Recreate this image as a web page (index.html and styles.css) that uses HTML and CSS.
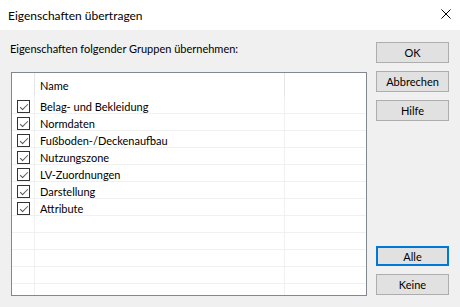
FILE: index.html
```html
<!DOCTYPE html>
<html lang="de">
<head>
  <meta charset="UTF-8">
  <title>Eigenschaften übertragen</title>
  <link rel="stylesheet" href="styles.css">
</head>
<body>
  <div class="titlebar">
    <div class="title">Eigenschaften übertragen</div>
    <div class="close">
      <svg width="10" height="10" viewBox="0 0 10 10">
        <path d="M0.5 0.5 L9.5 9.5 M9.5 0.5 L0.5 9.5" stroke="#000" stroke-width="1" fill="none"/>
      </svg>
    </div>
  </div>

  <div class="dialog">
    <div class="left">
      <div class="label">Eigenschaften folgender Gruppen übernehmen:</div>
      <div class="list">
        <div class="row header">
          <div class="cell check"></div>
          <div class="cell name">Name</div>
          <div class="cell rest"></div>
        </div>
        <div class="row"><div class="cell check"><span class="box"></span></div><div class="cell name">Belag- und Bekleidung</div><div class="cell rest"></div></div>
        <div class="row"><div class="cell check"><span class="box"></span></div><div class="cell name">Normdaten</div><div class="cell rest"></div></div>
        <div class="row"><div class="cell check"><span class="box"></span></div><div class="cell name">Fußboden-/Deckenaufbau</div><div class="cell rest"></div></div>
        <div class="row"><div class="cell check"><span class="box"></span></div><div class="cell name">Nutzungszone</div><div class="cell rest"></div></div>
        <div class="row"><div class="cell check"><span class="box"></span></div><div class="cell name">LV-Zuordnungen</div><div class="cell rest"></div></div>
        <div class="row"><div class="cell check"><span class="box"></span></div><div class="cell name">Darstellung</div><div class="cell rest"></div></div>
        <div class="row"><div class="cell check"><span class="box"></span></div><div class="cell name">Attribute</div><div class="cell rest"></div></div>
        <div class="row"><div class="cell check"></div><div class="cell name"></div><div class="cell rest"></div></div>
        <div class="row"><div class="cell check"></div><div class="cell name"></div><div class="cell rest"></div></div>
        <div class="row"><div class="cell check"></div><div class="cell name"></div><div class="cell rest"></div></div>
        <div class="row"><div class="cell check"></div><div class="cell name"></div><div class="cell rest"></div></div>
        <div class="row"><div class="cell check"></div><div class="cell name"></div><div class="cell rest"></div></div>
        <div class="row last"><div class="cell check"></div><div class="cell name"></div><div class="cell rest"></div></div>
      </div>
    </div>

    <div class="buttons">
      <button class="btn">OK</button>
      <button class="btn">Abbrechen</button>
      <button class="btn">Hilfe</button>
      <div class="spacer"></div>
      <button class="btn btn-default">Alle</button>
      <button class="btn">Keine</button>
    </div>
  </div>
</body>
</html>
```

FILE: styles.css
```css
* {
  margin: 0;
  padding: 0;
  box-sizing: border-box;
}

body {
  width: 460px;
  height: 307px;
  overflow: hidden;
  font-family: Lato, "Liberation Sans", sans-serif;
  font-size: 11px;
  color: #000;
  background: #f0f0f0;
}

.titlebar {
  height: 30px;
  background: white;
  display: flex;
  align-items: center;
  justify-content: space-between;
  padding: 0 9px 0 8px;
}

.title {
  font-size: 12px;
}

.close {
  display: flex;
  margin-top: -2px;
}

.dialog {
  display: flex;
  padding: 0 11px 0 11px;
  height: 277px;
}

.left {
  width: 356px;
}

.label {
  height: 17px;
  line-height: 17px;
  margin-top: 10px;
  margin-left: -1px;
}

.list {
  margin-top: 15px;
  height: 224px;
  background: white;
  border: 1px solid #828790;
  overflow: hidden;
}

.row {
  display: flex;
  height: 17px;
  border-bottom: 1px solid #f0f0f0;
}

.row.header {
  height: 24px;
  border-bottom: none;
}

.row.last {
  border-bottom: none;
}

.cell {
  border-right: 1px solid #f0f0f0;
  display: flex;
  align-items: center;
  line-height: 14px;
  padding-top: 3px;
}

.header .cell {
  border-right-color: #e5e5e5;
  padding-top: 1px;
}

.check {
  width: 23px;
  justify-content: center;
  padding-left: 1px;
}

.name {
  width: 250px;
  padding-left: 5px;
}

.rest {
  width: 80px;
  border-right: none;
}

.box {
  width: 13px;
  height: 13px;
  border: 1px solid #333;
  background: white;
  position: relative;
}

.box::after {
  content: "";
  position: absolute;
  left: 4px;
  top: 1px;
  width: 3px;
  height: 7px;
  border-right: 1px solid #555;
  border-bottom: 1px solid #555;
  transform: rotate(45deg);
}

.buttons {
  display: flex;
  flex-direction: column;
  margin-left: 9px;
  padding-top: 12px;
  width: 73px;
}

.btn {
  height: 21px;
  width: 73px;
  font-family: Lato, "Liberation Sans", sans-serif;
  font-size: 11px;
  color: #000;
  background: #e1e1e1;
  border: 1px solid #adadad;
  margin-bottom: 8px;
}

.btn-default {
  border: 2px solid #0078d7;
  height: 20px;
}

.spacer {
  flex: 1;
  max-height: 117px;
}
```
